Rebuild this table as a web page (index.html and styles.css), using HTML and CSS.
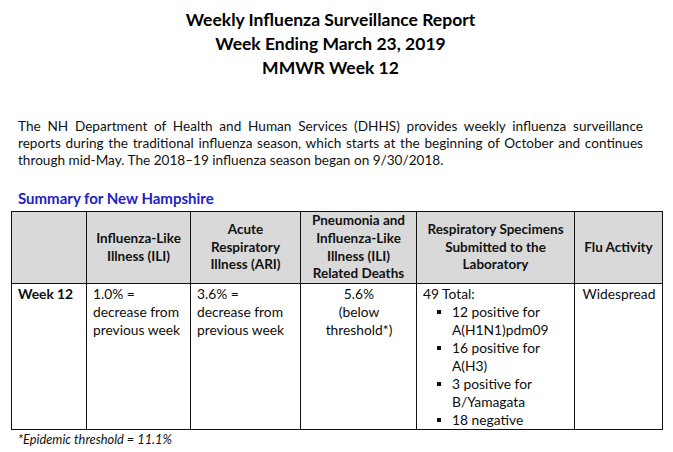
FILE: index.html
```html
<!DOCTYPE html>
<html lang="en">
<head>
<meta charset="utf-8">
<title>Weekly Influenza Surveillance Report</title>
<link rel="stylesheet" href="styles.css">
</head>
<body>
<div class="page">
  <header class="title">
    <div>Weekly Influenza Surveillance Report</div>
    <div>Week Ending March 23, 2019</div>
    <div>MMWR Week 12</div>
  </header>
  <p class="intro">The NH Department of Health and Human Services (DHHS) provides weekly influenza surveillance reports during the traditional influenza season, which starts at the beginning of October and continues through mid-May. The 2018–19 influenza season began on 9/30/2018.</p>
  <h2 class="summary">Summary for New Hampshire</h2>
  <table class="stats">
    <colgroup>
      <col class="c1"><col class="c2"><col class="c3"><col class="c4"><col class="c5"><col class="c6">
    </colgroup>
    <thead>
      <tr>
        <th></th>
        <th>Influenza-Like<br>Illness (ILI)</th>
        <th>Acute<br>Respiratory<br>Illness (ARI)</th>
        <th>Pneumonia and<br>Influenza-Like<br>Illness (ILI)<br>Related Deaths</th>
        <th>Respiratory Specimens<br>Submitted to the<br>Laboratory</th>
        <th>Flu Activity</th>
      </tr>
    </thead>
    <tbody>
      <tr>
        <td class="week">Week 12</td>
        <td>1.0% =<br>decrease from<br>previous week</td>
        <td>3.6% =<br>decrease from<br>previous week</td>
        <td class="center">5.6%<br>(below<br>threshold*)</td>
        <td>49 Total:
          <ul class="bullets">
            <li>12 positive for<br>A(H1N1)pdm09</li>
            <li>16 positive for<br>A(H3)</li>
            <li>3 positive for<br>B/Yamagata</li>
            <li>18 negative</li>
          </ul>
        </td>
        <td class="center">Widespread</td>
      </tr>
    </tbody>
  </table>
  <p class="note">*Epidemic threshold = 11.1%</p>
</div>
</body>
</html>
```
FILE: styles.css
```css
html, body {
  margin: 0;
  padding: 0;
  background: #ffffff;
}
body {
  font-family: Lato, "Open Sans", sans-serif;
  color: #0d0d0d;
}
.page {
  width: 625px;
  padding: 8px 30px 0 18px;
}
.title {
  text-align: center;
  font-weight: 700;
  font-size: 17.5px;
  line-height: 24px;
  color: #000;
}
.intro {
  margin: 38px 0 0 0;
  font-size: 13.6px;
  line-height: 17px;
  text-align: justify;
  color: #111;
}
.summary {
  margin: 20px 0 0 0;
  font-size: 15px;
  line-height: 18px;
  font-weight: 700;
  color: #2222c4;
}
.stats {
  margin: 4px 0 0 -7px;
  width: 651px;
  border-collapse: collapse;
  table-layout: fixed;
  font-size: 13.8px;
}
.c1 { width: 75px; }
.c2 { width: 104px; }
.c3 { width: 110px; }
.c4 { width: 116px; }
.c5 { width: 158px; }
.c6 { width: 88px; }
.stats th, .stats td {
  border: 1px solid #111;
  padding: 0 5px;
  white-space: nowrap;
}
.stats th {
  background: #d9d9d9;
  font-weight: 700;
  font-size: 13.5px;
  line-height: 17.8px;
  text-align: center;
  vertical-align: middle;
  color: #111;
}
.stats td {
  line-height: 18px;
  vertical-align: top;
  text-align: left;
  padding-top: 1px;
  padding-left: 6px;
}
.stats td.week {
  font-weight: 700;
}
.stats td.center {
  text-align: center;
}
.bullets {
  list-style: none;
  margin: 0;
  padding: 0 0 0 29px;
}
.bullets li {
  position: relative;
}
.bullets li::before {
  content: "";
  position: absolute;
  left: -15px;
  top: 7px;
  width: 4px;
  height: 4px;
  background: #111;
}
.note {
  margin: 0;
  font-size: 12.8px;
  line-height: 18px;
  font-style: italic;
  color: #111;
}
```
